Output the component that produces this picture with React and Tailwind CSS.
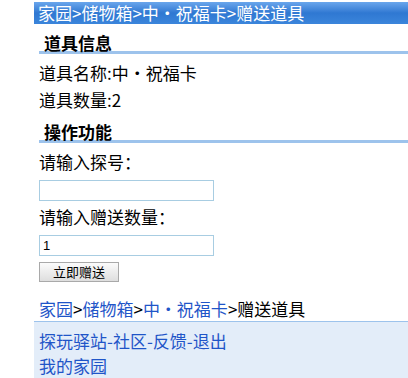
export default function App() {
  return (
    <div className="min-h-screen bg-white pl-[34px] pt-[2px] text-[17px] text-black" style={{ fontFamily: '"Noto Sans CJK SC", "Noto Sans", sans-serif' }}>
      {/* title bar */}
      <div className="h-[22px] bg-gradient-to-b from-[#6aa6ec] via-[#2f78d2] to-[#3b85db] pl-[4px] leading-[22px] text-white">
        家园&gt;储物箱&gt;中・祝福卡&gt;赠送道具
      </div>

      <div className="pl-[5px]">
        <div className="mt-[10px] border-b-[3px] border-[#9dc3ec] pl-[5px] font-bold leading-[17px]">道具信息</div>
        <div className="mt-[9px] leading-[20px]">道具名称:中・祝福卡</div>
        <div className="mt-[7px] leading-[20px]">道具数量:2</div>

        <div className="mt-[13px] border-b-[3px] border-[#9dc3ec] pl-[5px] font-bold leading-[17px]">操作功能</div>
        <div className="mt-[9px] leading-[20px]">请输入探号：</div>
        <input className="mt-[8px] block h-[21px] w-[175px] border border-[#a8cde2] px-[3px] text-[13px] outline-none" style={{ fontFamily: '"Liberation Sans", Arial, sans-serif' }} />
        <div className="mt-[6px] leading-[20px]">请输入赠送数量：</div>
        <input defaultValue="1" className="mt-[8px] block h-[21px] w-[175px] border border-[#a8cde2] px-[3px] text-[13px] text-black outline-none" style={{ fontFamily: '"Liberation Sans", Arial, sans-serif' }} />
        <button className="mt-[6px] block h-[20px] w-[80px] border border-[#a9a9a9] bg-gradient-to-b from-[#fbfbfb] to-[#dedede] text-[13px] leading-[18px] text-black">立即赠送</button>

        <div className="mt-[17px] pb-[2px] leading-[20px]">
          <span className="text-[#1f55c8]">家园</span>&gt;<span className="text-[#1f55c8]">储物箱</span>&gt;<span className="text-[#1f55c8]">中・祝福卡</span>&gt;赠送道具
        </div>
      </div>

      <div className="border-t border-[#9dc3ec] bg-[#e3edf9] pl-[5px] pt-[9px] pb-[4px] text-[#1f55c8]">
        <div className="leading-[20px]">探玩驿站-社区-反馈-退出</div>
        <div className="mt-[5px] leading-[20px]">我的家园</div>
      </div>
    </div>
  )
}
